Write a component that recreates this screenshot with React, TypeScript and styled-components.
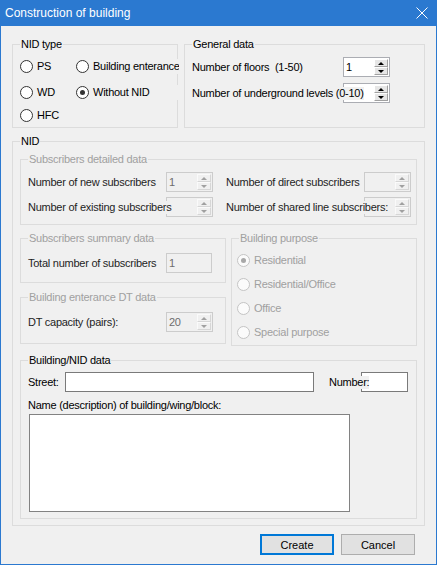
import React from 'react'
import styled, { createGlobalStyle } from 'styled-components'

const GlobalStyle = createGlobalStyle`
  html, body {
    margin: 0;
    padding: 0;
    background: #ffffff;
  }
  body {
    font-family: 'Liberation Sans', Arial, sans-serif;
    font-size: 11px;
    letter-spacing: -0.25px;
    color: #000000;
  }
`

const Window = styled.div`
  width: 437px;
  height: 565px;
  box-sizing: border-box;
  display: flex;
  flex-direction: column;
  background: #f0f0f0;
  border: 1px solid #2b79d0;
  border-top: none;
`

const TitleBar = styled.div`
  height: 26px;
  flex: none;
  display: flex;
  align-items: center;
  justify-content: space-between;
  padding: 0 8px 0 4px;
  background: #2b79d0;
  color: #ffffff;
  font-size: 12px;
  letter-spacing: 0;
`

const Body = styled.div`
  flex: 1;
  display: flex;
  flex-direction: column;
  padding: 12px 11px 9px;
`

const TopRow = styled.div`
  display: grid;
  grid-template-columns: 166px 241px;
  column-gap: 6px;
`

const Group = styled.fieldset`
  margin: 0;
  min-width: 0;
  border: 1px solid #dcdcdc;
  padding: 0 7px;
`

const NidGroup = styled(Group)`
  margin-top: 7px;
  padding-top: 6px;
  padding-bottom: 6px;
`

const PurposeGroup = styled(Group)`
  padding-left: 5px;
  & > legend {
    margin-left: 2px;
  }
`

const Caption = styled.legend<{ $disabled?: boolean }>`
  padding: 0 1px;
  margin: 0;
  height: 12px;
  line-height: 12px;
  color: ${p => (p.$disabled ? '#a0a0a0' : '#000000')};
`

const NidTypeGrid = styled.div`
  display: grid;
  grid-template-columns: 56px 103px;
  grid-template-rows: 26px 26px 20px;
  align-items: center;
  padding: 3px 0 2px;
`

const RadioItem = styled.label<{ $disabled?: boolean }>`
  position: relative;
  display: flex;
  align-items: center;
  gap: 4px;
  height: 15px;
  overflow: hidden;
  white-space: nowrap;
  background: #f0f0f0;
  color: ${p => (p.$disabled ? '#a0a0a0' : '#000000')};
`

const RadioMark = styled.span<{ $checked?: boolean; $disabled?: boolean }>`
  flex: none;
  width: 13px;
  height: 13px;
  box-sizing: border-box;
  border-radius: 50%;
  border: 1px solid ${p => (p.$disabled ? '#c4c4c4' : '#333333')};
  background: ${p => (p.$disabled ? '#fbfbfb' : '#ffffff')};
  display: grid;
  place-items: center;

  &::after {
    content: '';
    display: ${p => (p.$checked ? 'block' : 'none')};
    width: 5px;
    height: 5px;
    border-radius: 50%;
    background: ${p => (p.$disabled ? '#a8a8a8' : '#333333')};
  }
`

const RowStack = styled.div<{ $top: number; $bottom: number; $gap: number }>`
  display: flex;
  flex-direction: column;
  gap: ${p => p.$gap}px;
  padding: ${p => p.$top}px 0 ${p => p.$bottom}px;
`

const FieldRow = styled.div<{ $labelWidth: number; $fieldWidth?: number }>`
  display: grid;
  grid-template-columns: ${p => p.$labelWidth}px ${p => p.$fieldWidth ?? 47}px;
  align-items: center;
  height: 20px;
`

const FieldLabel = styled.span<{ $muted?: boolean }>`
  position: relative;
  z-index: 1;
  width: max-content;
  line-height: 13px;
  white-space: nowrap;
  background: #f0f0f0;
  color: ${p => (p.$muted ? '#1e1e1e' : '#000000')};
`

const SpinBox = styled.div<{ $disabled?: boolean }>`
  display: flex;
  box-sizing: border-box;
  width: 47px;
  height: 20px;
  border: 1px solid ${p => (p.$disabled ? '#cccccc' : '#abadb3')};
  background: ${p => (p.$disabled ? '#f0f0f0' : '#ffffff')};
`

const SpinValue = styled.span<{ $disabled?: boolean }>`
  flex: 1;
  padding-left: 2px;
  line-height: 18px;
  color: ${p => (p.$disabled ? '#6d6d6d' : '#000000')};
`

const SpinButtons = styled.div`
  flex: none;
  width: 14px;
  display: flex;
  flex-direction: column;
  padding: 1px 1px 1px 0;
`

const SpinButton = styled.span<{ $disabled?: boolean }>`
  flex: 1;
  box-sizing: border-box;
  display: grid;
  place-items: center;
  border: 1px solid;
  border-color: ${p =>
    p.$disabled ? '#fafafa #d6d6d6 #d6d6d6 #fafafa' : '#ffffff #a0a0a0 #a0a0a0 #ffffff'};
  background: ${p => (p.$disabled ? '#f0f0f0' : '#e6e6e6')};
`

const Arrow = styled.span<{ $down?: boolean; $disabled?: boolean }>`
  width: 0;
  height: 0;
  border-left: 3px solid transparent;
  border-right: 3px solid transparent;
  ${p =>
    p.$down
      ? `border-top: 3px solid ${p.$disabled ? '#a0a0a0' : '#000000'};`
      : `border-bottom: 3px solid ${p.$disabled ? '#a0a0a0' : '#000000'};`}
`

const TextBox = styled.input<{ $width: number; $disabled?: boolean }>`
  box-sizing: border-box;
  width: ${p => p.$width}px;
  height: 20px;
  margin: 0;
  padding: 0 2px;
  font: inherit;
  border: 1px solid ${p => (p.$disabled ? '#cccccc' : '#7a7a7a')};
  background: ${p => (p.$disabled ? '#f0f0f0' : '#ffffff')};
  color: ${p => (p.$disabled ? '#6d6d6d' : '#000000')};
  outline: none;
`

const DetailGrid = styled.div`
  display: grid;
  grid-template-columns: 185px 185px;
  column-gap: 13px;
  row-gap: 5px;
  padding: 7px 0 7px;
`

const MiddleRow = styled.div`
  display: grid;
  grid-template-columns: 206px 186px;
  column-gap: 5px;
  align-items: start;
  margin-top: 7px;
`

const LeftColumn = styled.div`
  display: flex;
  flex-direction: column;
  gap: 8px;
`

const PurposeList = styled.div`
  display: grid;
  grid-auto-rows: 24px;
  align-items: center;
  padding: 4px 0 1px;
`

const BuildingGroup = styled(Group)`
  margin-top: 8px;
  padding-top: 6px;
  padding-bottom: 6px;
`

const StreetRow = styled.div`
  display: grid;
  grid-template-columns: 37px 264px 32px 47px;
  align-items: center;
  height: 20px;
`

const NoteLabel = styled.div`
  margin-top: 7px;
  line-height: 12px;
`

const NoteArea = styled.textarea`
  display: block;
  box-sizing: border-box;
  width: 321px;
  height: 98px;
  margin: 3px 0 0 1px;
  padding: 2px;
  font: inherit;
  border: 1px solid #828282;
  background: #ffffff;
  resize: none;
  outline: none;
`

const Footer = styled.div`
  display: flex;
  justify-content: flex-end;
  gap: 7px;
  margin-top: 8px;
  padding-right: 10px;
`

const DialogButton = styled.button<{ $primary?: boolean }>`
  box-sizing: border-box;
  width: 74px;
  height: 21px;
  margin: 0;
  padding: 0;
  font: inherit;
  letter-spacing: 0;
  color: #000000;
  background: #e1e1e1;
  border: ${p => (p.$primary ? '2px solid #0078d7' : '1px solid #adadad')};
`

type SpinProps = { value?: string; disabled?: boolean }

const Spinner = ({ value = '', disabled }: SpinProps) => (
  <SpinBox $disabled={disabled}>
    <SpinValue $disabled={disabled}>{value}</SpinValue>
    <SpinButtons>
      <SpinButton $disabled={disabled}>
        <Arrow $disabled={disabled} />
      </SpinButton>
      <SpinButton $disabled={disabled}>
        <Arrow $down $disabled={disabled} />
      </SpinButton>
    </SpinButtons>
  </SpinBox>
)

type RadioProps = { label: string; checked?: boolean; disabled?: boolean }

const Radio = ({ label, checked, disabled }: RadioProps) => (
  <RadioItem $disabled={disabled}>
    <RadioMark $checked={checked} $disabled={disabled} />
    {label}
  </RadioItem>
)

const CloseIcon = () => (
  <svg width="12" height="12" viewBox="0 0 12 12">
    <path d="M0.5 0.5 L11.5 11.5 M11.5 0.5 L0.5 11.5" stroke="#ffffff" strokeWidth="1" />
  </svg>
)

const purposes = ['Residential', 'Residential/Office', 'Office', 'Special purpose']

export default function App() {
  return (
    <>
      <GlobalStyle />
      <Window>
        <TitleBar>
          <span>Construction of building</span>
          <CloseIcon />
        </TitleBar>
        <Body>
          <TopRow>
            <Group>
              <Caption>NID type</Caption>
              <NidTypeGrid>
                <Radio label="PS" />
                <Radio label="Building enterance" />
                <Radio label="WD" />
                <Radio label="Without NID" checked />
                <Radio label="HFC" />
              </NidTypeGrid>
            </Group>
            <Group>
              <Caption>General data</Caption>
              <RowStack $top={7} $bottom={0} $gap={6}>
                <FieldRow $labelWidth={151}>
                  <FieldLabel>Number of floors&nbsp; (1-50)</FieldLabel>
                  <Spinner value="1" />
                </FieldRow>
                <FieldRow $labelWidth={151}>
                  <FieldLabel>Number of underground levels (0-10)</FieldLabel>
                  <Spinner />
                </FieldRow>
              </RowStack>
            </Group>
          </TopRow>

          <NidGroup>
            <Caption>NID</Caption>

            <Group>
              <Caption $disabled>Subscribers detailed data</Caption>
              <DetailGrid>
                <FieldRow $labelWidth={138}>
                  <FieldLabel $muted>Number of new subscribers</FieldLabel>
                  <Spinner value="1" disabled />
                </FieldRow>
                <FieldRow $labelWidth={138}>
                  <FieldLabel $muted>Number of direct subscribers</FieldLabel>
                  <Spinner disabled />
                </FieldRow>
                <FieldRow $labelWidth={138}>
                  <FieldLabel $muted>Number of existing subscribers</FieldLabel>
                  <Spinner disabled />
                </FieldRow>
                <FieldRow $labelWidth={138}>
                  <FieldLabel $muted>Number of shared line subscribers:</FieldLabel>
                  <Spinner disabled />
                </FieldRow>
              </DetailGrid>
            </Group>

            <MiddleRow>
              <LeftColumn>
                <Group>
                  <Caption $disabled>Subscribers summary data</Caption>
                  <RowStack $top={9} $bottom={9} $gap={0}>
                    <FieldRow $labelWidth={138} $fieldWidth={46}>
                      <FieldLabel $muted>Total number of subscribers</FieldLabel>
                      <TextBox $width={46} $disabled defaultValue="1" readOnly />
                    </FieldRow>
                  </RowStack>
                </Group>
                <Group>
                  <Caption $disabled>Building enterance DT data</Caption>
                  <RowStack $top={9} $bottom={11} $gap={0}>
                    <FieldRow $labelWidth={138}>
                      <FieldLabel $muted>DT capacity (pairs):</FieldLabel>
                      <Spinner value="20" disabled />
                    </FieldRow>
                  </RowStack>
                </Group>
              </LeftColumn>
              <PurposeGroup>
                <Caption $disabled>Building purpose</Caption>
                <PurposeList>
                  {purposes.map((p, i) => (
                    <Radio key={p} label={p} checked={i === 0} disabled />
                  ))}
                </PurposeList>
              </PurposeGroup>
            </MiddleRow>

            <BuildingGroup>
              <Caption>Building/NID data</Caption>
              <StreetRow>
                <FieldLabel>Street:</FieldLabel>
                <TextBox $width={249} defaultValue="" />
                <FieldLabel>Number:</FieldLabel>
                <TextBox $width={47} defaultValue="" />
              </StreetRow>
              <NoteLabel>Name (description) of building/wing/block:</NoteLabel>
              <NoteArea defaultValue="" />
            </BuildingGroup>
          </NidGroup>

          <Footer>
            <DialogButton $primary>Create</DialogButton>
            <DialogButton>Cancel</DialogButton>
          </Footer>
        </Body>
      </Window>
    </>
  )
}
